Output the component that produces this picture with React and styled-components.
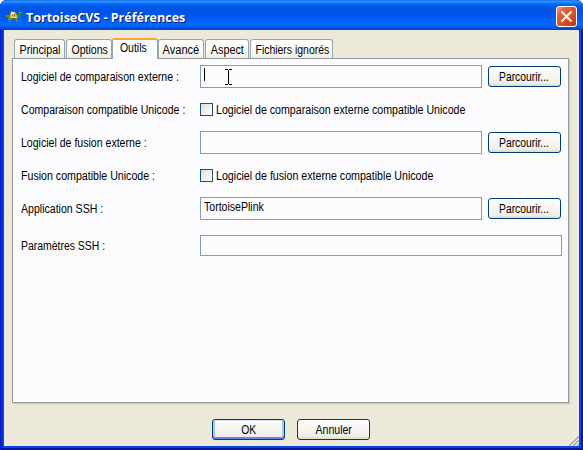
import React from "react";
import styled, { createGlobalStyle, css } from "styled-components";

const Global = createGlobalStyle`
  * { box-sizing: border-box; }
  body { margin: 0; background: #fff; overflow: hidden; }
  button, input { font: inherit; }
`;

const Window = styled.div`
  width: 583px;
  height: 450px;
  display: flex;
  flex-direction: column;
  padding: 0 4px 4px;
  background: #0b46ea;
  border-radius: 7px 7px 0 0;
  box-shadow: inset 1px 0 #0019cf, inset -1px 0 #00138c, inset -2px 0 #001ea0,
    inset 0 -1px #00138c, inset 0 -2px #001ea0, inset 3px 0 #0831d9, inset -4px 0 #0048f1;
  font-family: "Liberation Sans", Arial, sans-serif;
  font-size: 12px;
  color: #000;
`;

const TitleBar = styled.header`
  flex: none;
  display: flex;
  align-items: center;
  height: 30px;
  margin: 0 -4px;
  padding: 4px 6px 0;
  border-radius: 7px 7px 0 0;
  background: linear-gradient(
    #0058e6 0, #3a93ff 1px, #288eff 2px, #127dff 3px, #036ffc 4px, #0262ee 5px,
    #0057e5 7px, #0054e3 10px, #0055eb 15px, #005bf5 18px, #026afe 24px,
    #0062f6 26px, #0052dc 28px, #0040c4 30px
  );
`;

const Title = styled.h1`
  flex: 1;
  margin: 0 0 0 4px;
  font: bold 13px/18px "Open Sans", "Noto Sans", sans-serif;
  color: #fff;
  text-shadow: 1px 1px #0a1883;
  white-space: nowrap;
  transform: scaleX(0.962);
  transform-origin: left;
`;

const CloseButton = styled.button`
  display: flex;
  flex: none;
  align-items: center;
  justify-content: center;
  width: 21px;
  height: 21px;
  margin-top: -1px;
  padding: 0;
  border: 1px solid #fff;
  border-radius: 3px;
  background: linear-gradient(135deg, #f0a08a 0, #e4613b 25%, #dd4a22 65%, #b8310c 100%);
`;

const Client = styled.main`
  flex: 1;
  display: flex;
  flex-direction: column;
  padding: 8px 10px 0 8px;
  background: #ece9d8;
`;

const Tabs = styled.nav`
  flex: none;
  display: flex;
  align-items: flex-end;
  height: 21px;
  margin-bottom: -1px;
  padding-left: 2px;
`;

const Text = styled.span`
  display: inline-block;
  white-space: nowrap;
  transform: scaleX(${(p) => p.$scale ?? 0.885});
  transform-origin: ${(p) => (p.$centered ? "center" : "left")};
`;

const Tab = styled.div`
  flex: none;
  display: flex;
  justify-content: center;
  width: ${(p) => p.$width}px;
  height: 19px;
  margin: 0 ${(p) => p.$gap ?? 0}px 1px 0;
  padding: 3px 0 0 ${(p) => p.$indent ?? 0}px;
  line-height: 15px;
  border: 1px solid #91a7b4;
  border-bottom: 0;
  border-radius: 3px 3px 0 0;
  background: linear-gradient(#fff, #fafaf7 60%, #efeee6);
  ${(p) => p.$active && css`
    height: 21px;
    margin-bottom: 0;
    padding: 1px 4px 0 0;
    border-top: 2px solid #f5a72c;
    background: #fcfcfe;
    z-index: 1;
  `}
`;

const Panel = styled.section`
  flex: none;
  width: 557px;
  height: 345px;
  padding: 1px 7px 0 8px;
  border: 1px solid #919b9c;
  background: #fcfcfe;
  box-shadow: 1px 1px #d0cebf, 2px 2px #e3e0d0;
`;

const Row = styled.div`
  display: grid;
  grid-template-columns: 179px 1fr auto;
  align-items: center;
  height: 33px;
  margin-top: ${(p) => p.$top ?? 0}px;
`;

const Field = styled.div`
  position: relative;
  height: ${(p) => p.$height ?? 23}px;
  padding: 2px 3px;
  line-height: 14px;
  border: 1px solid #7f9db9;
  background: #fcfcfe;
  grid-column: ${(p) => (p.$wide ? "2 / 4" : "2")};
  margin-right: ${(p) => (p.$wide ? -1 : 0)}px;
`;

const Caret = styled.span`
  display: block;
  width: 1px;
  height: 13px;
  background: #000;
`;

const Pointer = styled.svg`
  position: absolute;
  left: 24px;
  top: 3px;
`;

const Button = styled.button`
  width: 73px;
  height: 21px;
  margin-left: ${(p) => p.$left ?? 0}px;
  padding: 0;
  line-height: 18px;
  border: 1px solid #003c74;
  border-radius: 3px;
  background: linear-gradient(#fff, #f6f5f0 45%, #f0efe8 85%, #dcd8cd);
  color: #000;
  ${(p) => p.$primary && css`
    box-shadow: inset 0 1px #cee7ff, inset 0 -2px #6982ee, inset 2px 0 #a9c4f5, inset -2px 0 #a9c4f5;
  `}
`;

const CheckLabel = styled.label`
  display: flex;
  align-items: center;
  gap: 3px;
  grid-column: 2 / 4;
`;

const CheckBox = styled.span`
  width: 13px;
  height: 13px;
  border: 1px solid #1c5180;
  background: linear-gradient(135deg, #dcdcd7, #f3f3ef 55%, #fff);
`;

const Footer = styled.footer`
  flex: 1;
  display: flex;
  align-items: flex-start;
  gap: 12px;
  margin-right: -10px;
  padding: 16px 0 0 200px;
`;

const Grip = styled.svg`
  margin-left: auto;
  align-self: flex-end;
`;

const TurtleIcon = () => (
  <svg width="16" height="16" viewBox="0 0 16 16" shapeRendering="crispEdges">
    <path d="M0 6h3v1h1v3H2V8H0z" fill="#a8741f" />
    <path d="M1 7h2v1H1zM2 9h4v2H5v2H3v-2H2z" fill="#35a13d" />
    <path d="M9 9h3v4h-2v-2H9z" fill="#35a13d" />
    <path d="M3 11h1v2H3zM10 12h2v1h-2z" fill="#9c7a20" />
    <path d="M10 7h2V4h1V3h3v3h-2v2h-1v1h-3z" fill="#149a38" />
    <path d="M13 3h2v1h-2z" fill="#4cd068" />
    <path d="M14 4h1v1h-1z" fill="#071e12" />
    <path d="M5 2h4v1h1v1h1v2h1v3h-1v1H4V9H3V5h1V3h1z" fill="#756c2c" />
    <path d="M5 3h4v1h1v2h1v2H4V5h1z" fill="#bdb777" />
    <path d="M5 3h3v2H6v1H5z" fill="#eee9c0" />
    <path d="M4 8h7v1H4z" fill="#e0d79a" />
    <path d="M8 5h1v2H8zM6 6h1v1H6z" fill="#948b45" />
  </svg>
);

const tabs = [
  { name: "Principal", width: 51, gap: 1, scale: 0.89, indent: 2 },
  { name: "Options", width: 46, scale: 0.88, indent: 2 },
  { name: "Outils", width: 46, active: true, scale: 0.87 },
  { name: "Avancé", width: 46, gap: 1, scale: 0.92 },
  { name: "Aspect", width: 44, gap: 1, scale: 0.9 },
  { name: "Fichiers ignorés", width: 83, scale: 0.87, indent: 2 },
];

const Browse = () => <Button $left={6}><Text $centered $scale={0.86}>Parcourir...</Text></Button>;

export default function App() {
  return (
    <>
      <Global />
      <Window>
        <TitleBar>
          <TurtleIcon />
          <Title>TortoiseCVS - Préférences</Title>
          <CloseButton aria-label="Fermer">
            <svg width="13" height="13" viewBox="0 0 13 13">
              <path d="M1.5 1.5l10 10M11.5 1.5l-10 10" stroke="#fff" strokeWidth="2" />
            </svg>
          </CloseButton>
        </TitleBar>
        <Client>
          <Tabs>
            {tabs.map((t) => (
              <Tab key={t.name} $width={t.width} $gap={t.gap} $indent={t.indent} $active={t.active}>
                <Text $centered $scale={t.scale}>{t.name}</Text>
              </Tab>
            ))}
          </Tabs>
          <Panel>
            <Row>
              <Text $scale={0.88}>Logiciel de comparaison externe :</Text>
              <Field>
                <Caret />
                <Pointer width="7" height="16" viewBox="0 0 7 16" shapeRendering="crispEdges">
                  <path d="M0 0h3v1H0zM4 0h3v1H4zM3 1h1v14H3zM0 15h3v1H0zM4 15h3v1H4z" />
                </Pointer>
              </Field>
              <Browse />
            </Row>
            <Row>
              <Text $scale={0.88}>Comparaison compatible Unicode :</Text>
              <CheckLabel>
                <CheckBox />
                <Text $scale={0.886}>Logiciel de comparaison externe compatible Unicode</Text>
              </CheckLabel>
            </Row>
            <Row>
              <Text $scale={0.88}>Logiciel de fusion externe :</Text>
              <Field />
              <Browse />
            </Row>
            <Row>
              <Text>Fusion compatible Unicode :</Text>
              <CheckLabel>
                <CheckBox />
                <Text $scale={0.888}>Logiciel de fusion externe compatible Unicode</Text>
              </CheckLabel>
            </Row>
            <Row>
              <Text $scale={0.88}>Application SSH :</Text>
              <Field><Text $scale={0.88}>TortoisePlink</Text></Field>
              <Browse />
            </Row>
            <Row $top={4}>
              <Text $scale={0.87}>Paramètres SSH :</Text>
              <Field $wide $height={21} />
            </Row>
          </Panel>
          <Footer>
            <Button $primary><Text $centered $scale={0.86}>OK</Text></Button>
            <Button><Text $centered $scale={0.88}>Annuler</Text></Button>
            <Grip width="12" height="12" viewBox="0 0 12 12">
              <path d="M1 12L12 1M5 12l7-7M9 12l3-3" stroke="#fff" strokeWidth="1.3" />
              <path d="M2 12L12 2M6 12l6-6M10 12l2-2" stroke="#aca899" strokeWidth="1.6" />
            </Grip>
          </Footer>
        </Client>
      </Window>
    </>
  );
}
